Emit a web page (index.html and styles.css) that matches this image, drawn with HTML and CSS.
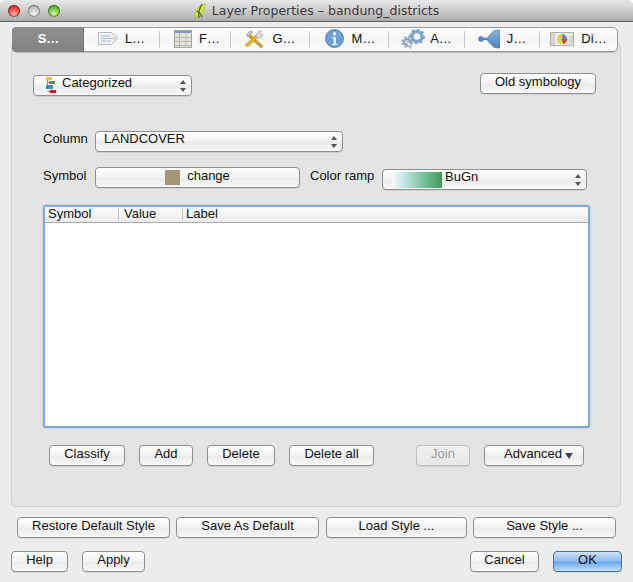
FILE: index.html
```html
<!DOCTYPE html>
<html>
<head>
<meta charset="utf-8" />
<title>Layer Properties</title>
<link rel="stylesheet" href="styles.css">
</head>
<body>
<div class="window">
  <div class="titlebar">
    <div class="lights">
      <span class="light red"></span>
      <span class="light grey"></span>
      <span class="light green"></span>
    </div>
    <div class="title">
      <svg width="12" height="16" viewBox="0 0 12 16">
        <path d="M1 14C0 9 3 3 11 1c0 5-2 11-6 13z" fill="#d3e04f" stroke="#a9bd34" stroke-width=".7"/>
        <path d="M8 1C5 6 4 10 5 15M3 8c2 1 4 3 5 6" fill="none" stroke="#3f6b22" stroke-width="1.300"/>
      </svg>
      <span>Layer Properties – bandung_districts</span>
    </div>
  </div>

  <div class="tabs">
    <div class="tab tab-s selected"><div class="tab-in"><span>S…</span></div></div>
    <div class="tab tab-l"><div class="tab-in">
      <svg width="20" height="13" viewBox="0 0 20 13">
        <path d="M.5.5h13l6 6-6 6H.5z" fill="#f1f3f6" stroke="#b4b9bf"/>
        <path d="M3 4h10M3 6.500h11M3 9h10" stroke="#a4bedd"/>
        <circle cx="16" cy="6.500" r="1" fill="#fff" stroke="#a5abb2" stroke-width=".6"/>
      </svg>
      <span>L…</span></div></div>
    <div class="tab tab-f"><div class="tab-in">
      <svg width="18" height="18" viewBox="0 0 18 18">
        <rect width="18" height="18" fill="#e2e4da"/>
        <rect width="18" height="3" fill="#7f9fc6"/>
        <path d="M0 7.500h18M0 11.500h18M0 15.500h18M5.500 3v15M12 3v15" stroke="#b6b9ac"/>
        <rect x=".5" y=".5" width="17" height="17" fill="none" stroke="#a6a89f"/>
      </svg>
      <span>F…</span></div></div>
    <div class="tab tab-g"><div class="tab-in">
      <svg width="18" height="18" viewBox="0 0 18 18">
        <path d="M5 4l13 12-2 2L3 6z" fill="#cfa52f" stroke="#96751a" stroke-width=".5"/>
        <path d="M1 5l4-4 3 1-5 5z" fill="#c6c6c0" stroke="#85857e" stroke-width=".5"/>
        <path d="M0 15L11 5l2 2L3 17z" fill="#e3b733" stroke="#a5831f" stroke-width=".5"/>
        <path d="M11 6c0-3 3-6 6-5l-2 2 1 2 2-1c0 3-3 5-5 4z" fill="#dededa" stroke="#93938c" stroke-width=".5"/>
      </svg>
      <span>G…</span></div></div>
    <div class="tab tab-m"><div class="tab-in">
      <svg width="19" height="19" viewBox="0 0 20 20">
        <circle cx="10" cy="10" r="9.500" fill="#6e9fd0" stroke="#5a89ba"/>
        <circle cx="10" cy="5" r="1.800" fill="#e9f1f8"/>
        <path d="M8 8.500h3.500v7H13v1.500H7.500v-1.500H9V10H8z" fill="#e9f1f8"/>
      </svg>
      <span>M…</span></div></div>
    <div class="tab tab-a"><div class="tab-in">
      <svg width="24" height="20" viewBox="0 0 24 20">
        <circle cx="16" cy="7.500" r="5" fill="none" stroke="#80a6d0" stroke-width="3.400"/>
        <circle cx="16" cy="7.500" r="7" fill="none" stroke="#80a6d0" stroke-width="2" stroke-dasharray="2.500 2.900"/>
        <circle cx="6" cy="13" r="3" fill="none" stroke="#8ca6c2" stroke-width="2.400"/>
        <circle cx="6" cy="13" r="5" fill="none" stroke="#8ca6c2" stroke-width="1.600" stroke-dasharray="2 2"/>
        <path d="M6 12l.5 6 1.500-1.500 1.500 3 1-.5-1.500-3h2z" fill="#eee" stroke="#888" stroke-width=".5"/>
      </svg>
      <span>A…</span></div></div>
    <div class="tab tab-j"><div class="tab-in">
      <svg width="22" height="20" viewBox="0 0 22 20">
        <defs>
          <linearGradient id="joinfill" x1="0" y1="0" x2="0" y2="1">
            <stop offset="0" stop-color="#8fb6de"/>
            <stop offset="1" stop-color="#4a80bb"/>
          </linearGradient>
        </defs>
        <circle cx="3" cy="10" r="2.800" fill="#5588c0"/>
        <path d="M5 10h4" stroke="#5588c0" stroke-width="2"/>
        <path d="M8 10L16 1.500 22 1v18l-6-.5z" fill="url(#joinfill)" stroke="#3f6fa6" stroke-width=".6"/>
      </svg>
      <span>J…</span></div></div>
    <div class="tab tab-d"><div class="tab-in">
      <svg width="24" height="14" viewBox="0 0 24 14">
        <rect x=".5" y=".5" width="23" height="13" fill="#ecebe6" stroke="#b0b0a8"/>
        <path d="M1 1h4v12H1zM19 5l4-2v8l-4 1z" fill="#d6d6cf"/>
        <circle cx="12" cy="7" r="5" fill="#e8d24a"/>
        <path d="M12 7V2a5 5 0 0 1 5 5z" fill="#5b8fd0"/>
        <path d="M12 7h5a5 5 0 0 1-4 5z" fill="#d83a2e"/>
      </svg>
      <span>Di…</span></div></div>
  </div>

  <div class="panel">
    <div class="row row-top">
      <div class="btn combo combo-type">
        <svg class="cat-icon" width="10" height="17" viewBox="0 0 10 17">
          <rect x="0" y="0" width="6" height="3" fill="#e5c62d"/>
          <rect x="3" y="4" width="6" height="3" fill="#3fa84f"/>
          <rect x="0" y="8" width="7" height="4" fill="#2aa3ad"/>
          <rect x="4" y="13" width="6" height="3" fill="#b8261c"/>
          <path d="M1.500 3v9M1.500 5.500h2M1.500 14.500h3" stroke="#555" stroke-width=".6" fill="none"/>
        </svg>
        <span class="combo-text">Categorized</span>
        <span class="updown"></span>
      </div>
      <div class="btn old-btn">Old symbology</div>
    </div>

    <div class="row row-column">
      <div class="field-label">Column</div>
      <div class="btn combo combo-column">
        <span class="combo-text">LANDCOVER</span>
        <span class="updown"></span>
      </div>
    </div>

    <div class="row row-symbol">
      <div class="field-label">Symbol</div>
      <div class="btn symbol-btn"><span class="swatch"></span><span>change</span></div>
      <div class="ramp-label">Color ramp</div>
      <div class="btn combo combo-ramp">
        <span class="ramp"></span>
        <span class="combo-text">BuGn</span>
        <span class="updown"></span>
      </div>
    </div>

    <div class="table">
      <div class="thead">
        <div class="th th-symbol">Symbol</div>
        <div class="th th-value">Value</div>
        <div class="th th-label">Label</div>
      </div>
    </div>

    <div class="row row-actions">
      <div class="btn b-classify">Classify</div>
      <div class="btn b-add">Add</div>
      <div class="btn b-delete">Delete</div>
      <div class="btn b-deleteall">Delete all</div>
      <div class="btn b-join disabled">Join</div>
      <div class="btn b-advanced">Advanced<span class="caret"></span></div>
    </div>
  </div>

  <div class="row row-style">
    <div class="btn b-restore">Restore Default Style</div>
    <div class="btn b-saveas">Save As Default</div>
    <div class="btn b-load">Load Style ...</div>
    <div class="btn b-save">Save Style ...</div>
  </div>

  <div class="row row-dialog">
    <div class="btn b-help">Help</div>
    <div class="btn b-apply">Apply</div>
    <div class="spacer"></div>
    <div class="btn b-cancel">Cancel</div>
    <div class="btn b-ok">OK</div>
  </div>
</div>
</body>
</html>
```

FILE: styles.css
```css
html, body {
  margin: 0;
  padding: 0;
  background: #fff;
}
body {
  font-family: "Liberation Sans", Arial, sans-serif;
  font-size: 13px;
  color: #111;
}
.window {
  width: 633px;
  height: 582px;
  background: #ededed;
  border-radius: 5px 5px 0 0;
  overflow: hidden;
}
.titlebar {
  height: 21px;
  border-bottom: 1px solid #5f5f5f;
  background: linear-gradient(#e9e9e9, #d2d2d2 40%, #ababab);
  display: flex;
  align-items: center;
  justify-content: center;
  position: relative;
}
.lights {
  position: absolute;
  left: 8px;
  top: 5px;
  display: flex;
  gap: 8px;
}
.light {
  width: 12px;
  height: 12px;
  border-radius: 50%;
  box-shadow: inset 0 0 0 1px rgba(0,0,0,.35);
}
.red { background: radial-gradient(circle at 50% 75%, #ffb0a8, #e8413c 55%, #a31d1a); }
.grey { background: radial-gradient(circle at 50% 75%, #f2f2f2, #c9c9c9 55%, #8e8e8e); }
.green { background: radial-gradient(circle at 50% 75%, #d3f29f, #74c03f 55%, #3c7f1b); }
.title {
  display: flex;
  align-items: center;
  gap: 6px;
  font-family: "DejaVu Sans", sans-serif;
  font-size: 12.500px;
  color: #3a3a3a;
}

/* tabs */
.tabs {
  position: relative;
  z-index: 1;
  display: flex;
  width: 606px;
  height: 25px;
  margin: 5px 0 -10px 12px;
  box-sizing: border-box;
  border: 1px solid #9a9a9a;
  border-radius: 5px;
  background: linear-gradient(#fff, #f6f6f6 50%, #fbfbfb);
  box-shadow: 0 1px 0 #bbb;
}
.tab {
  padding: 3px 0;
  box-sizing: border-box;
}
.tab-in {
  height: 100%;
  display: flex;
  align-items: center;
  justify-content: center;
  gap: 7px;
  border-right: 1px solid #c9c9c9;
  padding-bottom: 2px;
  box-sizing: border-box;
}
.tab.selected {
  padding: 0;
  border-radius: 4px 0 0 4px;
  background: linear-gradient(#8f8f8f, #828282);
  color: #fff;
  font-weight: bold;
  margin: -1px 0 -1px -1px;
  height: 25px;
}
.tab.selected .tab-in { border-right-color: #777; padding-left: 2px; }
.tab-d .tab-in { border-right: 0; }
.tab-s { width: 72px; }
.tab-l { width: 76px; }
.tab-f { width: 71px; }
.tab-f .tab-in { padding-left: 4px; }
.tab-g { width: 79px; }
.tab-g .tab-in { gap: 9px; padding-left: 1px; }
.tab-m { width: 79px; }
.tab-m .tab-in { gap: 8px; padding-left: 2px; }
.tab-a { width: 76px; }
.tab-a .tab-in { gap: 5px; }
.tab-j { width: 75px; }
.tab-d { width: 77px; }

/* panel */
.panel {
  margin-left: 11px;
  width: 610px;
  height: 465px;
  box-sizing: border-box;
  border: 1px solid #d3d3d3;
  border-radius: 4px;
  background: #e4e4e4;
}
.row { display: flex; }
.btn {
  height: 21px;
  box-sizing: border-box;
  border: 1px solid #8f8f8f;
  border-radius: 4px;
  background: linear-gradient(#fff, #f4f4f4 45%, #ececec 55%, #f8f8f8);
  box-shadow: 0 1px 0 rgba(0,0,0,.08);
  display: flex;
  align-items: center;
  justify-content: center;
  padding-bottom: 5px;
  white-space: nowrap;
}
.combo { justify-content: flex-start; }
.combo-text { flex: 1; padding-bottom: 2px; }
.updown {
  width: 6px;
  height: 12px;
  margin: 5px 5px 0 0;
  display: flex;
  flex-direction: column;
  justify-content: space-between;
}
.updown::before, .updown::after {
  content: "";
  border-left: 3px solid transparent;
  border-right: 3px solid transparent;
}
.updown::before { border-bottom: 4px solid #555; }
.updown::after { border-top: 4px solid #555; }

.row-top {
  margin-top: 30px;
  padding: 0 24px 0 21px;
  justify-content: space-between;
  height: 23px;
}
.combo-type { width: 159px; margin-top: 2px; padding-left: 12px; }
.cat-icon { margin: 4px 6px 0 0; }
.old-btn { width: 116px; }

.row-column {
  margin-top: 35px;
  padding-left: 31px;
  height: 21px;
}
.field-label { width: 52px; }
.combo-column { width: 248px; padding-left: 8px; }

.row-symbol {
  margin-top: 15px;
  padding-left: 31px;
  height: 23px;
}
.row-symbol .field-label, .ramp-label { padding-top: 1px; }
.symbol-btn { width: 205px; gap: 7px; }
.swatch {
  width: 15px;
  height: 15px;
  background: #a6977a;
  margin-top: 5px;
}
.ramp-label { margin-left: 10px; width: 72px; }
.combo-ramp { width: 205px; margin-top: 2px; padding-left: 9px; }
.ramp {
  width: 50px;
  height: 16px;
  margin: 5px 3px 0 0;
  background: linear-gradient(90deg, #f5fbfb, #b8e2dc 30%, #6cba8f 70%, #41975a);
}

/* table */
.table {
  margin: 15px 0 0 31px;
  width: 547px;
  height: 223px;
  box-sizing: border-box;
  background: #fff;
  border: 2px solid #7ea9d8;
  border-radius: 3px;
  box-shadow: 0 0 2px #8fb4dc;
}
.thead {
  display: flex;
  height: 16px;
  box-sizing: border-box;
  border-bottom: 1px solid #aaa;
  background: linear-gradient(#fff, #f3f3f3 50%, #ececec);
  line-height: 14px;
}
.th {
  box-sizing: border-box;
  padding-left: 3px;
  height: 12px;
  margin-top: 1px;
  line-height: 12px;
  border-right: 1px solid #c4c4c4;
}
.th-symbol { width: 74px; }
.th-value { width: 64px; padding-left: 5px; }
.th-label { border-right: 0; }

.row-actions {
  margin-top: 17px;
  padding-left: 37px;
}
.b-classify { width: 76px; }
.b-add { width: 54px; margin-left: 14px; }
.b-delete { width: 68px; margin-left: 14px; }
.b-deleteall { width: 85px; margin-left: 14px; }
.b-join { width: 54px; margin-left: 42px; }
.b-advanced { width: 100px; margin-left: 14px; gap: 3px; padding-left: 9px; }
.disabled {
  color: #9b9b9b;
  border-color: #c0c0c0;
  background: linear-gradient(#f0f0f0, #e8e8e8);
}
.caret {
  border-left: 4.500px solid transparent;
  border-right: 4.500px solid transparent;
  border-top: 6px solid #444;
  margin-top: 5px;
}

.row-style {
  margin: 10px 0 0 17px;
}
.b-restore { width: 153px; }
.b-saveas { width: 143px; margin-left: 6px; }
.b-load { width: 141px; margin-left: 7px; }
.b-save { width: 143px; margin-left: 6px; }

.row-dialog {
  margin: 13px 11px 0 11px;
}
.spacer { flex: 1; }
.b-help { width: 57px; }
.b-apply { width: 63px; margin-left: 14px; }
.b-cancel { width: 69px; }
.b-ok {
  width: 69px;
  margin-left: 14px;
  border-color: #4f6f9c;
  background: linear-gradient(#cfe3f8, #90bdf0 45%, #6fa8ec 55%, #bfe0fb);
}
```
